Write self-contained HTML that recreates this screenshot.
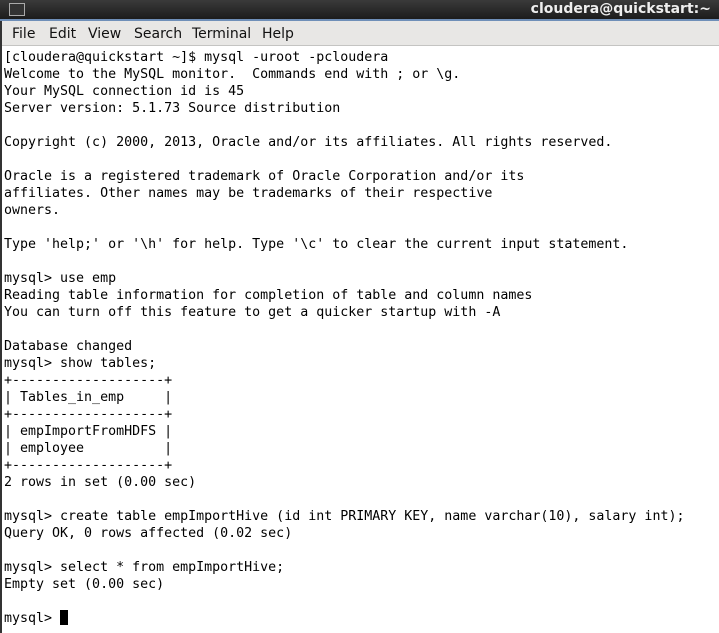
<!DOCTYPE html>
<html><head><style>
body{margin:0;width:719px;height:633px;overflow:hidden;background:#fff;position:relative;font-family:"DejaVu Sans",sans-serif}
#title{position:absolute;left:0;top:0;width:719px;height:19px;background:linear-gradient(#3a3a3a,#1c1c1c);border-bottom:2px solid #6f8fb8}
#title .t{position:absolute;right:8px;top:1px;color:#eee;font-weight:bold;font-size:14px}
#icon{position:absolute;left:9px;top:3px;width:14px;height:11px;border:1px solid #aaa;background:#333}
#menu{position:absolute;left:0;top:21px;width:719px;height:25px;background:#e8e7e5;border-bottom:1px solid #c4c4c2;border-left:2px solid #333;box-sizing:border-box}
#menu span{position:absolute;top:5px;font-size:14px;color:#111}
#lb{position:absolute;left:0;top:21px;width:2px;height:612px;background:#333}
pre{position:absolute;left:4px;top:49px;margin:0;font-family:"DejaVu Sans Mono","Liberation Mono",monospace;font-size:13.3px;line-height:17px;color:#000}
.cur{display:inline-block;width:8px;height:15px;background:#000;vertical-align:-3px}
</style></head><body>
<div id="title"><div id="icon"></div><span class="t">cloudera@quickstart:~</span></div>
<div id="menu"><span style="left:10px">File</span><span style="left:47px">Edit</span><span style="left:86px">View</span><span style="left:132px">Search</span><span style="left:190px">Terminal</span><span style="left:260px">Help</span></div>
<div id="lb"></div>
<pre>[cloudera@quickstart ~]$ mysql -uroot -pcloudera
Welcome to the MySQL monitor.  Commands end with ; or \g.
Your MySQL connection id is 45
Server version: 5.1.73 Source distribution

Copyright (c) 2000, 2013, Oracle and/or its affiliates. All rights reserved.

Oracle is a registered trademark of Oracle Corporation and/or its
affiliates. Other names may be trademarks of their respective
owners.

Type 'help;' or '\h' for help. Type '\c' to clear the current input statement.

mysql&gt; use emp
Reading table information for completion of table and column names
You can turn off this feature to get a quicker startup with -A

Database changed
mysql&gt; show tables;
+-------------------+
| Tables_in_emp     |
+-------------------+
| empImportFromHDFS |
| employee          |
+-------------------+
2 rows in set (0.00 sec)

mysql&gt; create table empImportHive (id int PRIMARY KEY, name varchar(10), salary int);
Query OK, 0 rows affected (0.02 sec)

mysql&gt; select * from empImportHive;
Empty set (0.00 sec)

mysql&gt; <span class="cur"></span></pre>
</body></html>
